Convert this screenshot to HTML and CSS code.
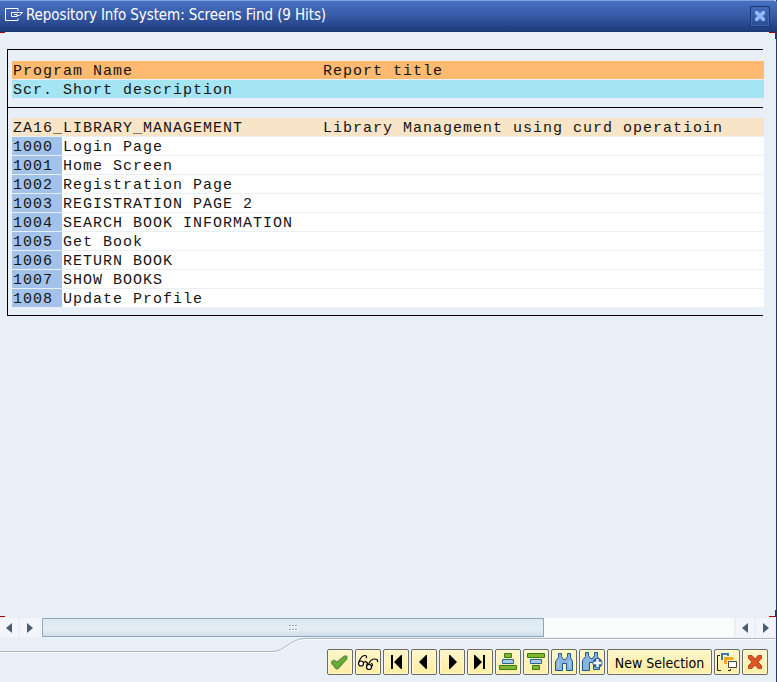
FILE: index.html
```html
<!DOCTYPE html>
<html lang="en">
<head>
<meta charset="utf-8">
<title>Repository Info System</title>
<link rel="stylesheet" href="styles.css">
</head>
<body>
<div class="window">
  <header class="titlebar">
    <svg class="title-icon" width="19" height="16" viewBox="0 0 19 16" fill="none" stroke="#fff"><path d="M13 4V1.500H.5V13.500H13V11.500M6.500 5.500H17.500L14.500 8.500H11.500M6.500 5.500V9.500H12.500M9 7.500H12.500"/></svg>
    <h1>Repository Info System: Screens Find (9 Hits)</h1>
    <button class="close" aria-label="Close"><svg width="12" height="12" viewBox="0 0 12 12"><path d="M1 1H4L6 3.500 8 1H11V4L8.500 6 11 8V11H8L6 8.500 4 11H1V8L3.500 6 1 4Z" fill="#8fb8fb"/></svg></button>
  </header>
  <main class="content">
    <i class="corner tl"></i><i class="corner tr"></i><i class="corner bl"></i><i class="corner br"></i>
    <section class="list">
      <div class="head">
        <div class="row orange"><span class="name">Program Name</span><span>Report title</span></div>
        <div class="row cyan"><span class="num">Scr.</span><span>Short description</span></div>
      </div>
      <div class="body">
        <div class="row tan"><span class="name">ZA16_LIBRARY_MANAGEMENT</span><span>Library Management using curd operatioin</span></div>
        <div class="row"><span class="num key">1000</span><span>Login Page</span></div>
        <div class="row"><span class="num key">1001</span><span>Home Screen</span></div>
        <div class="row"><span class="num key">1002</span><span>Registration Page</span></div>
        <div class="row"><span class="num key">1003</span><span>REGISTRATION PAGE 2</span></div>
        <div class="row"><span class="num key">1004</span><span>SEARCH BOOK INFORMATION</span></div>
        <div class="row"><span class="num key">1005</span><span>Get Book</span></div>
        <div class="row"><span class="num key">1006</span><span>RETURN BOOK</span></div>
        <div class="row"><span class="num key">1007</span><span>SHOW BOOKS</span></div>
        <div class="row"><span class="num key">1008</span><span>Update Profile</span></div>
      </div>
    </section>
  </main>
  <div class="scrollbar">
    <span class="arrow"><svg width="6" height="10"><path d="M6 0V10L0 5Z"/></svg></span>
    <span class="arrow second"><svg width="6" height="10"><path d="M0 0V10L6 5Z"/></svg></span>
    <div class="track"><div class="thumb"><svg width="9" height="6" viewBox="0 0 9 6"><path d="M1 1H9M1 5H9" stroke="#fff" stroke-width="2" stroke-dasharray="2 1"/><path d="M0 .5H8M0 4.500H8" stroke="#94a5b6" stroke-dasharray="2 1"/></svg></div></div>
    <span class="arrow"><svg width="6" height="10"><path d="M6 0V10L0 5Z"/></svg></span>
    <span class="arrow last"><svg width="6" height="10"><path d="M0 0V10L6 5Z"/></svg></span>
  </div>
  <footer class="footer">
    <svg class="wave" width="775" height="16" viewBox="0 0 775 16" fill="none"><path d="M0 14.500H274C285 14.500 292 1.500 306 1.500H775" stroke="#fff"/><path d="M0 13.500H273C284 13.500 291 .5 305 .5H775" stroke="#a9b7c9"/></svg>
    <div class="toolbar">
      <button aria-label="Continue"><svg viewBox="0 0 22 22"><path d="M2.500 10.500 5 9 8 11 15 5 18 5V8L9 18H7L3 13Z" fill="#62a82c" stroke="#60836d"/><path d="M5 11 8 14 16 7" stroke="#76be36" fill="none"/></svg></button>
      <button aria-label="Choose"><svg viewBox="0 0 22 22" fill="#fffbe6" stroke="#000" stroke-width="1.200"><circle cx="4" cy="12.500" r="2.500"/><circle cx="12" cy="16" r="2.500"/><path fill="none" d="M2 11C3 8 5 4.500 7.500 4.500S10 6 9 7M6.500 11.500 8.500 10.500 10.500 12 9.800 14.500M11.500 13.500C12.500 11 15 8 17.500 8S21 9 20.500 11M14.500 16 15.500 14 14.500 12"/></svg></button>
      <button aria-label="First"><svg viewBox="0 0 22 22"><path d="M6 4H8V18H6ZM17 4V18H16L9 11 16 4Z"/></svg></button>
      <button aria-label="Previous"><svg viewBox="0 0 22 22"><path d="M14 4V18H13L6 11 13 4Z"/></svg></button>
      <button aria-label="Next"><svg viewBox="0 0 22 22"><path d="M8 4V18H9L16 11 9 4Z"/></svg></button>
      <button aria-label="Last"><svg viewBox="0 0 22 22"><path d="M5 4V18H6L13 11 6 4ZM14 4H16V18H14Z"/></svg></button>
      <button aria-label="Sort ascending"><svg viewBox="0 0 22 22"><g fill="#80b72e" stroke="#36791e"><path d="M7.500 2.500H14.500V6.500H7.500ZM2.500 14.500H19.500V18.500H2.500Z"/></g><path d="M5.500 8.500H16.500V12.500H5.500Z" fill="#a9c9e6" stroke="#27658f"/></svg></button>
      <button aria-label="Sort descending"><svg viewBox="0 0 22 22"><g fill="#80b72e" stroke="#36791e"><path d="M2.500 2.500H19.500V6.500H2.500ZM7.500 14.500H14.500V18.500H7.500Z"/></g><path d="M5.500 8.500H16.500V12.500H5.500Z" fill="#a9c9e6" stroke="#27658f"/></svg></button>
      <button aria-label="Find"><svg viewBox="0 0 22 22"><path d="M5.500 2.500H8.500V5.500L10.500 8.500H12.500L14.500 5.500V2.500H17.500V6.500L19.500 10.500V19.500H13.500V12.500H9.500V19.500H2.500V10.500L5.500 6.500Z" fill="#87b4df" stroke="#1c598e"/><path d="M5.500 9V17M16.500 9V17" stroke="#b3d3ef"/></svg></button>
      <button aria-label="Find next"><svg viewBox="0 0 22 22"><path d="M4.500 1.500H7.500V4.500L9.500 7.500H11.500L13.500 4.500V1.500H16.500V5.500L18.500 9.500V18.500H12.500V11.500H8.500V19.500H1.500V9.500L4.500 5.500Z" fill="#87b4df" stroke="#1c598e"/><circle cx="16.500" cy="12" r="5" fill="#2c5c9e"/><path d="M16.500 8V16M12.500 12H20.500" stroke="#fff" stroke-width="2.400"/></svg></button>
      <button class="text">New Selection</button>
      <button aria-label="New session"><svg viewBox="0 0 22 22" fill="none"><path d="M4 4.500H1.500V19.500H5M12 19.500H14.500V18" stroke="#222"/><path d="M6 9V3H12V5" stroke="#3979ad" stroke-width="2"/><path d="M9.500 13V7.500H16V9" stroke="#f5a522" stroke-width="3"/><path d="M12.500 10.500H20.500V16.500H12.500Z" fill="#fff" stroke="#444"/></svg></button>
      <button aria-label="Cancel"><svg viewBox="0 0 22 22"><path d="M4.500 4.500H8L11 8 14 4.500H17.500V7.500L14 11 17.500 14.500V17.500H14L11 14 8 17.500H4.500V14.500L8 11 4.500 7.500Z" fill="#dd5525" stroke="#b94928"/></svg></button>
    </div>
  </footer>
</div>
</body>
</html>
```
FILE: styles.css
```css
* { box-sizing: border-box; }
body { margin: 0; overflow: hidden; }
.window { width: 777px; height: 682px; display: flex; flex-direction: column; background: #e8eff6; border-right: 1px solid #1d3a7c; font-family: "DejaVu Sans Condensed", "DejaVu Sans", sans-serif; font-stretch: condensed; }
.titlebar { height: 32px; width: 777px; flex: none; display: flex; align-items: center; padding: 0 7px 0 5px; border-top: 1px solid #7fa3d8; border-bottom: 1px solid #1d386e; border-radius: 0 4px 0 0; background: linear-gradient(#4770c4, #385da9 45%, #1e3b7c); color: #fff; }
.title-icon { flex: none; margin: -3px 2px 0 0; }
h1 { margin: 0; padding-bottom: 2px; font: 15px "DejaVu Sans Condensed", "DejaVu Sans", sans-serif; font-stretch: condensed; letter-spacing: -0.09px; white-space: nowrap; }
.close { margin-left: auto; width: 20px; height: 21px; padding: 0; display: flex; align-items: center; justify-content: center; border: 1px solid #1c3771; border-radius: 1px; background: linear-gradient(#426bbb, #294b90); box-shadow: inset 0 0 0 1px #3e65b2; }
.content { flex: 1; position: relative; padding: 17px 12px 0 7px; }
.corner { position: absolute; width: 5px; height: 1px; background: #b00000; }
.tl { left: 0; top: 0; }
.bl { left: 0; bottom: 1px; }
.tr { right: 0; top: 0; width: 7px; height: 7px; background: none; border: solid #b00000; border-width: 1px 1px 0 0; }
.br { right: 0; bottom: 1px; width: 7px; height: 7px; background: none; border: solid #b00000; border-width: 0 1px 1px 0; }
.list { width: 756px; border: 1px solid #000; border-right: 0; font: 15px/21px "Liberation Mono", monospace; letter-spacing: 1px; color: #151515; }
.head { height: 58px; padding: 11px 0 0 4px; border-bottom: 1px solid #000; }
.body { padding: 10px 0 7px 4px; }
.row { width: 752px; height: 18px; margin-bottom: 1px; padding-left: 1px; display: flex; background: #fff; white-space: pre; }
.orange { background: #fdba70; }
.cyan { background: #a5e5f3; }
.tan { background: #f8e4c7; }
.name { width: 310px; }
.num { width: 50px; }
.key { margin-left: -1px; padding-left: 1px; width: 50px; margin-right: 1px; background: #a2c2e9; }
.scrollbar { height: 20px; flex: none; display: flex; background: #eaf0f6; }
.arrow { width: 18px; height: 19px; display: flex; align-items: center; justify-content: center; background: #f2f6fa; fill: #4a5e6e; }
.second { width: 20px; margin: 0 1px 0 2px; }
.last { width: 19px; margin-left: 2px; }
.track { width: 693px; height: 19px; margin-right: 2px; padding-left: 1px; background: #fafbfb; }
.thumb { width: 502px; height: 19px; display: flex; align-items: center; justify-content: center; border: 1px solid #93a6b9; background: linear-gradient(#dce7f1, #e5eef6 60%, #d0ddea); }
.footer { height: 44px; flex: none; position: relative; }
.wave { position: absolute; left: 0; top: 0; }
.toolbar { display: flex; gap: 2px; padding: 11px 0 0 327px; }
.toolbar button { width: 26px; height: 26px; padding: 1px; flex: none; border: 1px solid #6d6d5f; border-radius: 2px; background: linear-gradient(#fff6ca, #ffeda2); box-shadow: inset 0 0 0 1px #fff8d7; color: #000; }
.toolbar svg { display: block; width: 22px; height: 22px; }
.toolbar .text { width: 105px; padding-top: 2px; font: 14px "DejaVu Sans Condensed", "DejaVu Sans", sans-serif; font-stretch: condensed; letter-spacing: 0; white-space: nowrap; }
```
